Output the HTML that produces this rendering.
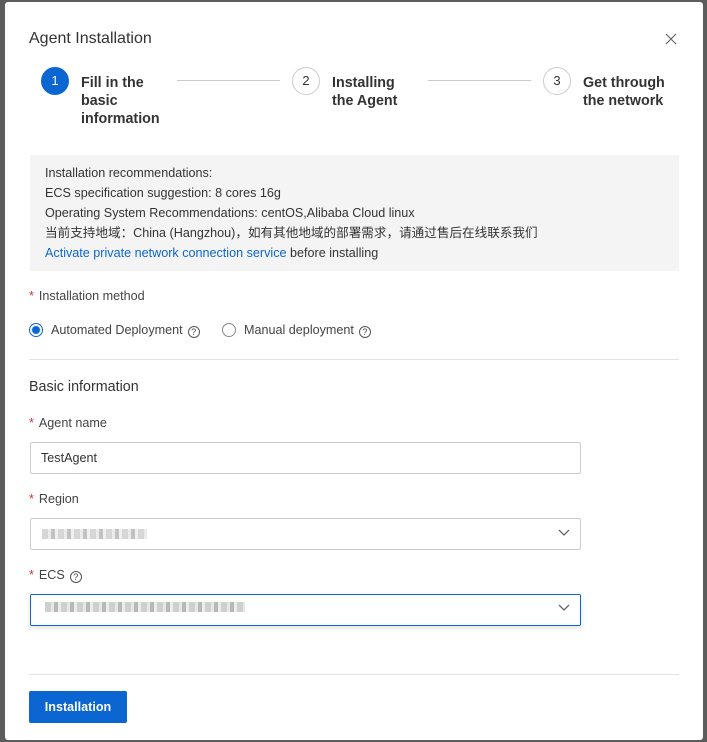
<!DOCTYPE html>
<html><head><meta charset="utf-8"><style>
*{box-sizing:border-box;margin:0;padding:0}
body{width:707px;height:742px;background:#5c5c5c;font-family:"Liberation Sans","Noto Sans CJK SC",sans-serif;color:#333;position:relative;overflow:hidden}
.m{position:absolute;left:5px;top:2px;width:698px;height:738px;background:#fff;border-radius:3px}
.a{position:absolute}
.t{font-size:16px;color:#333}
.c{width:28px;height:28px;border-radius:50%;border:1px solid #ccc;text-align:center;line-height:26px;font-size:13px;color:#333}
.st{font-size:14.3px;font-weight:bold;line-height:18px;color:#333}
.ln{height:1px;background:#ccc}
.box{left:30px;top:155px;width:649px;height:116px;background:#f4f4f5}
.box div{font-size:12.6px;line-height:20px;color:#333}
.lab{font-size:12.6px;color:#444}
.lab b{color:#d93026;font-weight:normal;margin-right:5px}
.inp{left:30px;width:551px;height:32px;border:1px solid #ccc;border-radius:2px;font-size:12.6px;padding-left:10px;line-height:30px}
.q{display:inline-block;width:12px;height:12px;border:1px solid #555;border-radius:50%;font-size:9px;line-height:10px;text-align:center;vertical-align:-1px;margin-left:5px}
.blur{position:absolute;height:10px;background:repeating-linear-gradient(90deg,#bbb 0 6px,#ddd 6px 9px,#999 9px 13px,#e5e5e5 13px 16px)}
</style></head><body>
<div class="m"></div>
<div class="a t" style="left:29px;top:30px">Agent Installation</div>
<svg class="a" style="left:665px;top:33px" width="12" height="12"><path d="M1 1L11 11M11 1L1 11" stroke="#666" stroke-width="1.2"/></svg>
<div class="a c" style="left:41px;top:67px;background:#0b66d2;border-color:#0b66d2;color:#fff">1</div>
<div class="a st" style="left:81px;top:74px">Fill in the<br>basic<br>information</div>
<div class="a ln" style="left:177px;top:80px;width:103px"></div>
<div class="a c" style="left:292px;top:67px">2</div>
<div class="a st" style="left:332px;top:74px">Installing<br>the Agent</div>
<div class="a ln" style="left:428px;top:80px;width:103px"></div>
<div class="a c" style="left:543px;top:67px">3</div>
<div class="a st" style="left:583px;top:74px">Get through<br>the network</div>
<div class="a box" style="padding:8px 15px">
<div>Installation recommendations:</div>
<div>ECS specification suggestion: 8 cores 16g</div>
<div>Operating System Recommendations: centOS,Alibaba Cloud linux</div>
<div>当前支持地域：China (Hangzhou)，如有其他地域的部署需求，请通过售后在线联系我们</div>
<div><span style="color:#0b66d2">Activate private network connection service</span> before installing</div>
</div>
<div class="a lab" style="left:29px;top:289px"><b>*</b>Installation method</div>
<div class="a" style="left:29px;top:323px;width:14px;height:14px;border-radius:50%;border:1px solid #0b66d2;background:radial-gradient(#0b66d2 3.5px,#fff 4.5px)"></div>
<div class="a lab" style="left:51px;top:323px">Automated Deployment<span class="q">?</span></div>
<div class="a" style="left:222px;top:323px;width:14px;height:14px;border-radius:50%;border:1px solid #888"></div>
<div class="a lab" style="left:244px;top:323px">Manual deployment<span class="q">?</span></div>
<div class="a ln" style="left:29px;top:359px;width:650px;background:#e3e3e3"></div>
<div class="a" style="left:29px;top:379px;font-size:14.3px;color:#333">Basic information</div>
<div class="a lab" style="left:29px;top:416px"><b>*</b>Agent name</div>
<div class="a inp" style="top:442px">TestAgent</div>
<div class="a lab" style="left:29px;top:492px"><b>*</b>Region</div>
<div class="a inp" style="top:518px"></div>
<div class="blur" style="left:42px;top:529px;width:105px;opacity:.6"></div>
<svg class="a" style="left:558px;top:529px" width="12" height="8"><path d="M1 1L6 6L11 1" stroke="#666" fill="none" stroke-width="1.3"/></svg>
<div class="a lab" style="left:29px;top:568px"><b>*</b>ECS<span class="q">?</span></div>
<div class="a inp" style="top:594px;border-color:#0b66d2;box-shadow:0 2px 6px rgba(0,0,0,.12)"></div>
<div class="blur" style="left:45px;top:602px;width:200px;opacity:.7"></div>
<svg class="a" style="left:558px;top:604px" width="12" height="8"><path d="M1 1L6 6L11 1" stroke="#666" fill="none" stroke-width="1.3"/></svg>
<div class="a ln" style="left:29px;top:674px;width:650px;background:#e3e3e3"></div>
<div class="a" style="left:29px;top:691px;width:98px;height:32px;background:#0b66d2;border-radius:2px;color:#fff;font-size:12.6px;font-weight:bold;text-align:center;line-height:32px">Installation</div>
</body></html>
